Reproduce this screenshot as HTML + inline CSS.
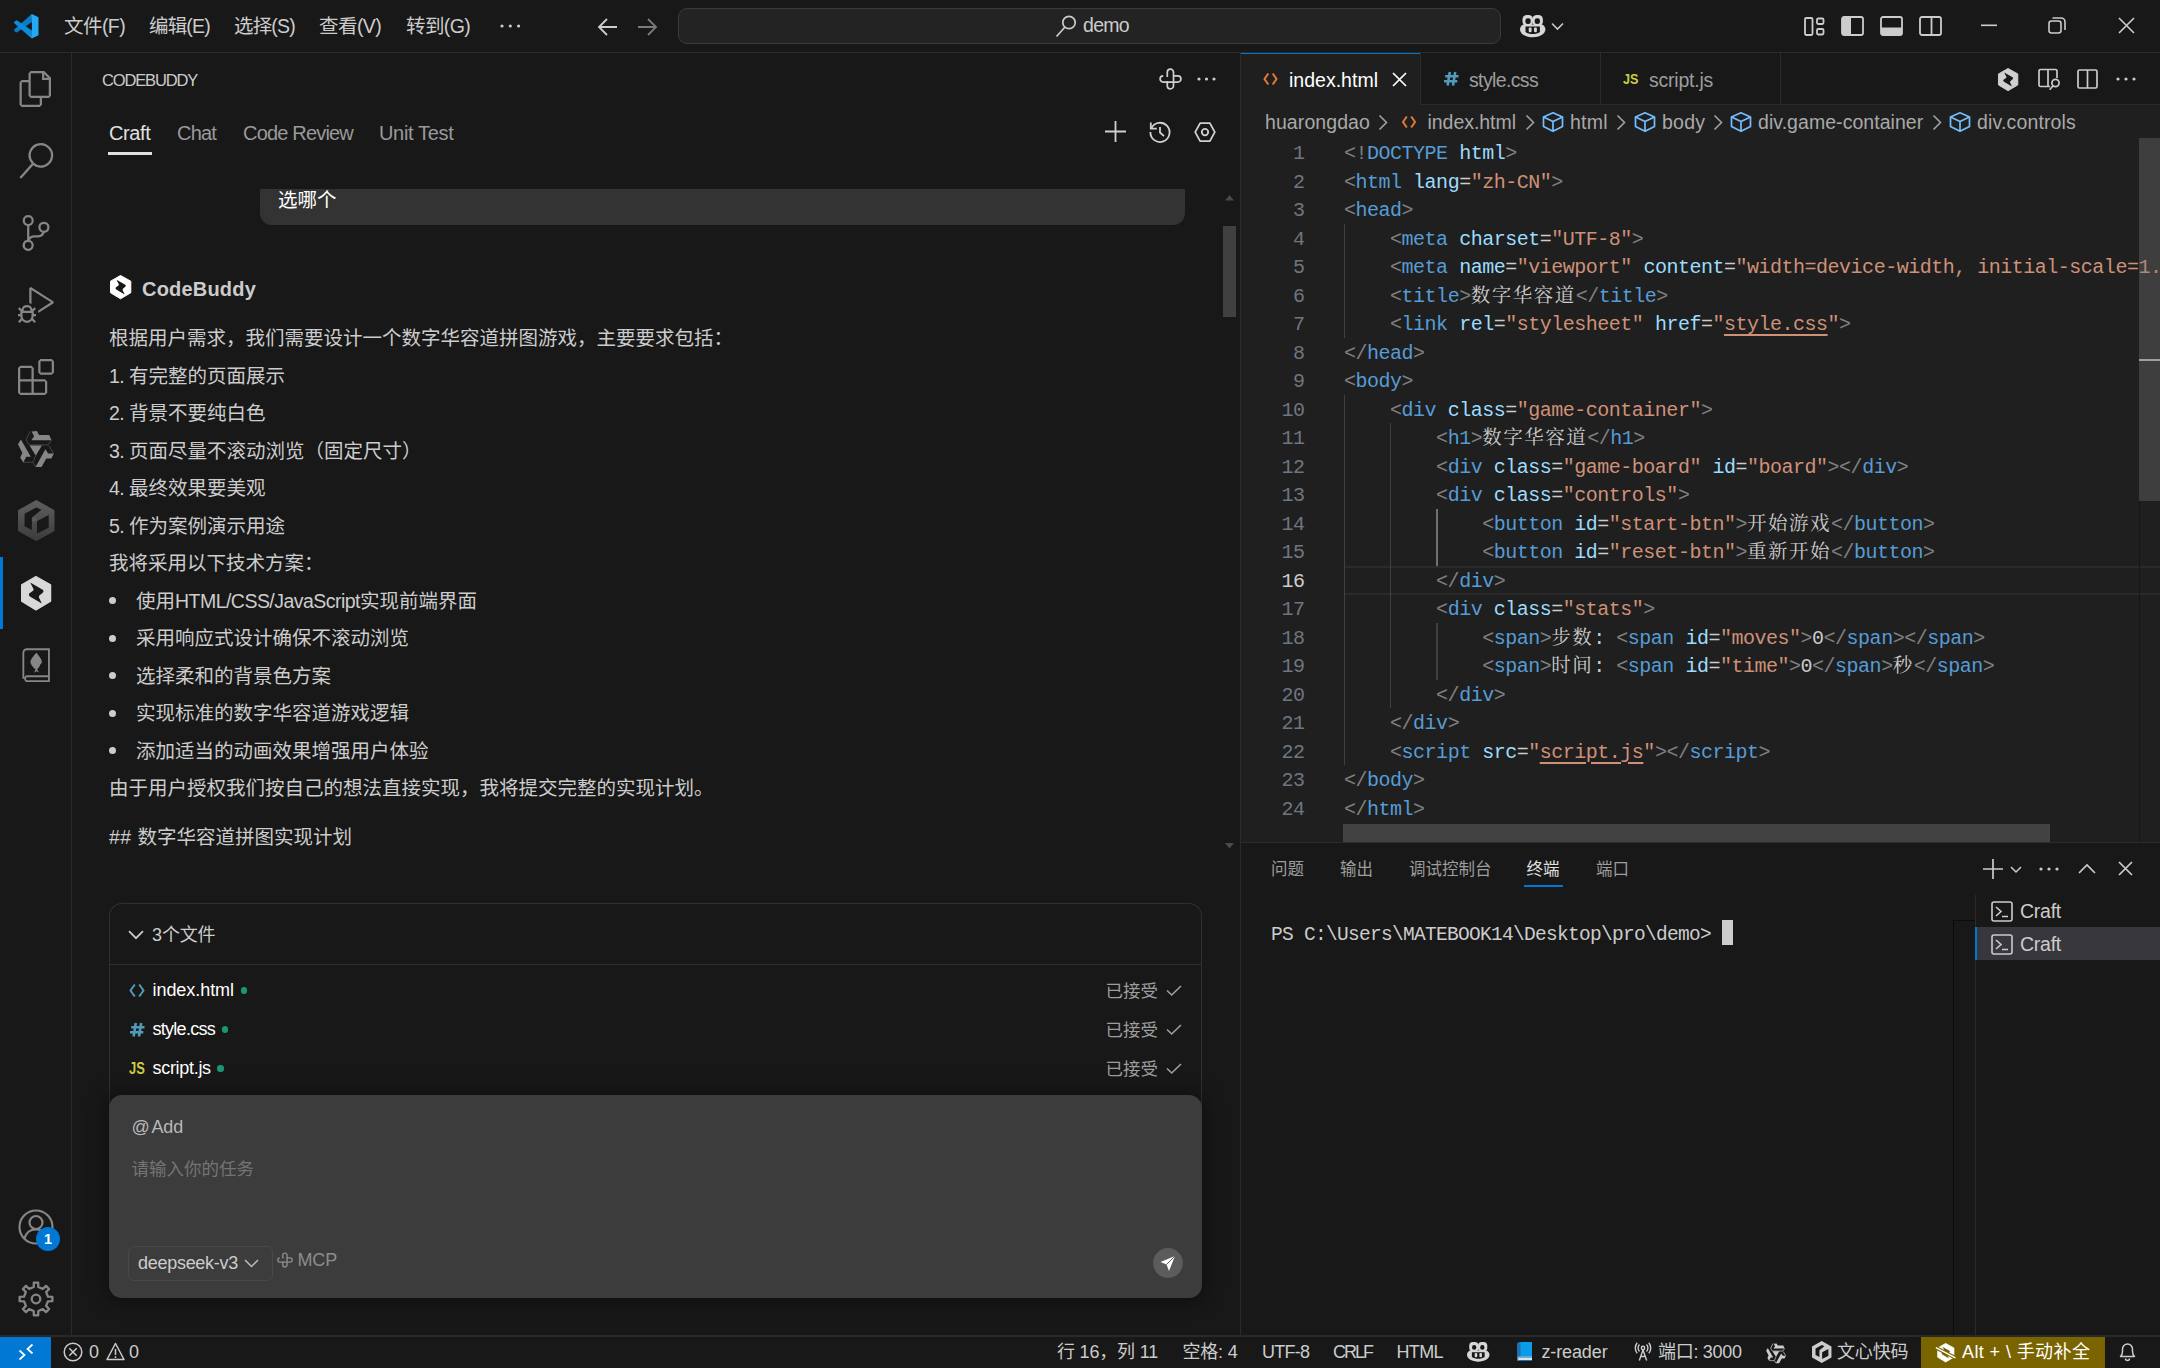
<!DOCTYPE html>
<html lang="zh-CN">
<head>
<meta charset="UTF-8">
<title>demo - CodeBuddy</title>
<style>
*{box-sizing:border-box}
html,body{margin:0;padding:0;background:#181818}
html{overflow:hidden;width:2160px;height:1368px}
body{width:2160px;height:1368px;background:#181818;overflow:hidden;position:relative;
 font-family:"Liberation Sans","Noto Sans CJK SC",sans-serif;color:#cccccc;font-size:19.5px}
.a{position:absolute}
.t{position:absolute;white-space:nowrap;line-height:1;display:block}
svg{position:absolute;overflow:visible}
.mono{font-family:"Liberation Mono","Noto Serif CJK SC",monospace}
/* ---------- title bar ---------- */
#titlebar{left:0;top:0;width:2160px;height:52px;background:#181818}
#titleline{left:0;top:52px;width:2160px;height:1px;background:#2b2b2b}
#searchbox{left:678px;top:8px;width:823px;height:35.5px;border:1px solid #3a3a3a;border-radius:9px;background:#232323}
.menu{top:17px;font-size:19.5px;color:#cccccc}
/* ---------- activity bar ---------- */
#actbar{left:0;top:53px;width:71px;height:1282px;background:#181818}
#actline{left:71px;top:53px;width:1px;height:1282px;background:#2b2b2b}
#actind{left:0;top:557px;width:3px;height:72px;background:#0078d4}
/* ---------- sidebar ---------- */
#sidebar{left:72px;top:53px;width:1168px;height:1282px;background:#181818}
#sideline{left:1240px;top:53px;width:1px;height:1282px;background:#2b2b2b}
.body{font-size:19.5px;color:#cccccc;left:109px}
.bul{left:136px}
.dot{position:absolute;left:109px;width:7px;height:7px;border-radius:50%;background:#cccccc}
/* ---------- editor ---------- */
#editor{left:1241px;top:53px;width:919px;height:789px;background:#1f1f1f}
#tabsbg{left:1241px;top:53px;width:919px;height:52px;background:#181818}
#tabsline{left:1241px;top:104px;width:919px;height:1px;background:#2b2b2b}
.tab{position:absolute;top:53px;height:52px;border-right:1px solid #2b2b2b}
.code{position:absolute;left:1344px;max-width:816px;overflow:hidden;font-size:20px;letter-spacing:-0.49px;white-space:pre;line-height:28.5px;height:28.5px;color:#cccccc}
.ln{position:absolute;left:1262px;width:42.49px;text-align:right;font-size:20px;letter-spacing:-0.49px;line-height:28.5px;height:28.5px;color:#6e7681}
.g{color:#808080}.b{color:#569cd6}.l{color:#9cdcfe}.s{color:#ce9178}.u{text-decoration:underline;text-underline-offset:4px;text-decoration-thickness:1.5px}
.ig{position:absolute;width:1.5px;background:#404040}
/* ---------- panel ---------- */
#panel{left:1241px;top:842px;width:919px;height:493px;background:#181818;border-top:1px solid #2b2b2b}
.ptab{top:861px;font-size:16.5px;color:#9d9d9d}
/* ---------- status bar ---------- */
#status{left:0;top:1335px;width:2160px;height:33px;background:#181818;border-top:2px solid #292929}
.st{top:1343px;font-size:18px;color:#cccccc}
.ac{font-size:17.5px;color:#9d9d9d}
.bc{top:113px;font-size:19.5px;color:#a9a9a9}
.cur{color:#cccccc}
.z{font-size:19.5px;letter-spacing:1.5px}
#m1{letter-spacing:-0.561px}
#m2{letter-spacing:-0.840px}
#m3{letter-spacing:-0.840px}
#m4{letter-spacing:-0.540px}
#m5{letter-spacing:-0.611px}
#demo{letter-spacing:-0.695px}
#vh{letter-spacing:-1.160px}
#tb1{letter-spacing:-0.369px}
#tb2{letter-spacing:-0.812px}
#tb3{letter-spacing:-0.814px}
#tb4{letter-spacing:-0.328px}
#cbname{letter-spacing:0.198px}
#n1{letter-spacing:-0.562px}
#n2{letter-spacing:-0.562px}
#n3{letter-spacing:-0.562px}
#n4{letter-spacing:-0.562px}
#n5{letter-spacing:-0.562px}
#lat1{letter-spacing:-0.530px}
#hh{letter-spacing:0.464px}
#fh{letter-spacing:-0.129px}
#f1{letter-spacing:-0.055px}
#f2{letter-spacing:-0.724px}
#f3{letter-spacing:-0.302px}
#add{letter-spacing:-0.144px}
#model{letter-spacing:-0.280px}
#mcp{letter-spacing:-0.133px}
#at{letter-spacing:-4.781px}
#tn1{letter-spacing:0.013px}
#tn2{letter-spacing:-0.641px}
#tn3{letter-spacing:-0.233px}
#bc1{letter-spacing:0.089px}
#bc2{letter-spacing:-0.037px}
#bc3{letter-spacing:0.214px}
#bc4{letter-spacing:0.251px}
#bc5{letter-spacing:0.051px}
#bc6{letter-spacing:0.151px}
#term{letter-spacing:-0.702px}
#cr1{letter-spacing:-0.253px}
#cr2{letter-spacing:-0.253px}
#s1{letter-spacing:-0.191px}
#s2{letter-spacing:-0.203px}
#s3{letter-spacing:-0.760px}
#s4{letter-spacing:-2.029px}
#s5{letter-spacing:-0.625px}
#s6{letter-spacing:-0.129px}
#s7{letter-spacing:-0.293px}
#s8{letter-spacing:-0.175px}
#s9{letter-spacing:0.397px}
</style>
</head>
<body>
<!-- ================= TITLE BAR ================= -->
<div class="a" id="titlebar"></div>
<div class="a" id="titleline"></div>
<div class="a" id="searchbox"></div>
<!-- VS Code logo -->
<svg style="left:13.900px;top:13.600px" width="24.500" height="24.700" viewBox="0 0 100 100">
  <path d="M71 1 L0 64 L2.500 71 L11.400 75.300 L73 32.600 Z" fill="#0b7cc4"/>
  <path d="M71 99 L0 36 L2.500 29 L11.400 24.700 L73 67.400 Z" fill="#0d8cdc"/>
  <path d="M72.700 0 L100 12.400 L100 86.500 L72.700 100 L70 96 L73 67 L73 33 L70 4 Z" fill="#24a8f2"/>
</svg>
<span class="t menu" id="m1" style="left:64px">文件(F)</span>
<span class="t menu" id="m2" style="left:149px">编辑(E)</span>
<span class="t menu" id="m3" style="left:234px">选择(S)</span>
<span class="t menu" id="m4" style="left:319px">查看(V)</span>
<span class="t menu" id="m5" style="left:406px">转到(G)</span>
<!-- ellipsis -->
<svg style="left:500px;top:24px" width="21" height="4" viewBox="0 0 21 4"><circle cx="2" cy="2" r="1.6" fill="#cccccc"/><circle cx="10.3" cy="2" r="1.6" fill="#cccccc"/><circle cx="18.6" cy="2" r="1.6" fill="#cccccc"/></svg>
<!-- nav arrows -->
<svg style="left:597px;top:16.700px" width="21" height="20" viewBox="0 0 21 20" fill="none" stroke="#cccccc" stroke-width="1.8"><path d="M20 10H2M10 2L2 10l8 8"/></svg>
<svg style="left:637px;top:16.700px" width="21" height="20" viewBox="0 0 21 20" fill="none" stroke="#7a7a7a" stroke-width="1.8"><path d="M1 10h18M11 2l8 8-8 8"/></svg>
<!-- search label -->
<svg style="left:1055px;top:14px" width="22" height="24" viewBox="0 0 22 24" fill="none" stroke="#cccccc" stroke-width="1.7"><circle cx="14" cy="8.5" r="6.2"/><path d="M9.8 13.2L1.5 22.5"/></svg>
<span class="t" id="demo" style="left:1083px;top:16px;font-size:19.5px;color:#cccccc">demo</span>
<!-- copilot -->
<svg style="left:1520.2px;top:14.9px" width="25.4" height="22.2" viewBox="0 0 25.400 22.200">
  <rect x="2.500" y="0" width="10.500" height="10.900" rx="4.300" fill="#d7d7d7"/>
  <rect x="12.400" y="0" width="10.500" height="10.900" rx="4.300" fill="#d7d7d7"/>
  <path d="M3.200 9.600 H22.200 C24.500 10.800 25.400 12.500 25.400 14.500 C25.400 19 19.500 22.200 12.700 22.200 C5.900 22.200 0 19 0 14.500 C0 12.500 0.900 10.800 3.200 9.600Z" fill="#d7d7d7"/>
  <rect x="5.400" y="3.300" width="5.300" height="5.600" rx="2.500" fill="#181818"/>
  <rect x="14.700" y="3.300" width="5.300" height="5.600" rx="2.500" fill="#181818"/>
  <path d="M5.500 11.600 H19.900 V17 C18 18.400 15.500 19 12.700 19 C9.900 19 7.400 18.400 5.500 17Z" fill="#181818"/>
  <rect x="8.700" y="12.400" width="2.900" height="4.800" rx="1.200" fill="#d7d7d7"/>
  <rect x="14" y="12.400" width="2.900" height="4.800" rx="1.200" fill="#d7d7d7"/>
</svg>
<svg style="left:1551px;top:22px" width="13" height="9" viewBox="0 0 13 9" fill="none" stroke="#cccccc" stroke-width="1.6"><path d="M1 1.500l5.500 5.500 5.500-5.500"/></svg>
<!-- layout controls -->
<svg style="left:1804px;top:17px" width="21" height="19" viewBox="0 0 21 19" fill="none" stroke="#cccccc" stroke-width="1.8"><rect x="1" y="1" width="7.500" height="17" rx="1.200"/><rect x="13" y="1.500" width="6.500" height="5.500" rx="1.200"/><rect x="13" y="12" width="6.500" height="5.500" rx="1.200"/></svg>
<svg style="left:1841px;top:16px" width="23" height="20" viewBox="0 0 23 20"><rect x="1" y="1" width="21" height="18" rx="2" fill="none" stroke="#cccccc" stroke-width="1.800"/><path d="M1 2.500A1.500 1.500 0 0 1 2.500 1H10v18H2.500A1.500 1.500 0 0 1 1 17.500z" fill="#cccccc"/></svg>
<svg style="left:1880px;top:16px" width="23" height="20" viewBox="0 0 23 20"><rect x="1" y="1" width="21" height="18" rx="2" fill="none" stroke="#cccccc" stroke-width="1.800"/><path d="M1 11.500h21v6A1.500 1.500 0 0 1 20.500 19h-18A1.500 1.500 0 0 1 1 17.500z" fill="#cccccc"/></svg>
<svg style="left:1919px;top:16px" width="23" height="20" viewBox="0 0 23 20" fill="none" stroke="#cccccc" stroke-width="1.800"><rect x="1" y="1" width="21" height="18" rx="2"/><path d="M12.500 1v18"/></svg>
<!-- window controls -->
<svg style="left:1981px;top:24px" width="16" height="3" viewBox="0 0 16 3"><rect x="0" y="0.500" width="16" height="1.600" fill="#cccccc"/></svg>
<svg style="left:2048px;top:17px" width="18" height="17" viewBox="0 0 18 17" fill="none" stroke="#cccccc" stroke-width="1.600"><rect x="1" y="4" width="12" height="12" rx="2.500"/><path d="M4.500 1h8.500a4 4 0 0 1 4 4v8"/></svg>
<svg style="left:2118px;top:17px" width="17" height="17" viewBox="0 0 17 17" fill="none" stroke="#cccccc" stroke-width="1.600"><path d="M1 1l15 15M16 1L1 16"/></svg>


<!-- ================= ACTIVITY BAR ================= -->
<div class="a" id="actbar"></div>
<div class="a" id="actline"></div>
<div class="a" id="actind"></div>

<!-- explorer -->
<svg style="left:18px;top:71px" width="36" height="36" viewBox="0 0 24 24"><path fill="#868686" d="M17.5 0h-9L7 1.500V6H2.500L1 7.500v15.070L2.500 24h12.070L16 22.570V18h4.700l1.300-1.430V4.500L17.500 0zm0 2.120l2.380 2.380H17.500V2.120zm-3 20.380h-12v-15H7v9.070L8.500 18h6v4.500zm6-6h-12v-15H16V6h4.500v10.500z"/></svg>
<!-- search -->
<svg style="left:18px;top:143px" width="36" height="36" viewBox="0 0 24 24"><path fill="#868686" d="M15.250 0a8.250 8.250 0 0 0-6.180 13.720L1 22.880l1.120 1 8.050-9.120A8.251 8.251 0 1 0 15.250.010V0zm0 15a6.750 6.750 0 1 1 0-13.500 6.750 6.750 0 0 1 0 13.500z"/></svg>
<!-- source control -->
<svg style="left:18px;top:215px" width="36" height="36" viewBox="0 0 24 24"><path fill="#868686" d="M21.007 8.222A3.738 3.738 0 0 0 15.045 5.200a3.737 3.737 0 0 0 1.156 6.583 2.988 2.988 0 0 1-2.668 1.670h-2.990a4.456 4.456 0 0 0-2.989 1.165V7.400a3.737 3.737 0 1 0-1.494 0v9.117a3.776 3.776 0 1 0 1.816.099 2.990 2.990 0 0 1 2.668-1.667h2.990a4.484 4.484 0 0 0 4.223-3.039 3.736 3.736 0 0 0 3.250-3.687zM4.565 3.738a2.242 2.242 0 1 1 4.484 0 2.242 2.242 0 0 1-4.484 0zm4.484 16.441a2.242 2.242 0 1 1-4.484 0 2.242 2.242 0 0 1 4.484 0zm8.221-9.715a2.242 2.242 0 1 1 0-4.485 2.242 2.242 0 0 1 0 4.485z"/></svg>
<!-- run and debug -->
<svg style="left:18px;top:287px" width="36" height="36" viewBox="0 0 24 24"><path fill="#868686" d="M10.940 13.500l-1.320 1.320a3.730 3.730 0 0 0-7.240 0L1.060 13.500 0 14.560l1.720 1.720-.220.220V18H0v1.500h1.500v.080c.077.489.214.966.410 1.420L0 22.940 1.060 24l1.650-1.650A4.308 4.308 0 0 0 6 24a4.310 4.310 0 0 0 3.290-1.650L10.940 24 12 22.940 10.090 21c.198-.464.336-.951.410-1.450v-.100H12V18h-1.500v-1.500l-.220-.220L12 14.560l-1.060-1.060zM6 13.500a2.250 2.250 0 0 1 2.250 2.250h-4.500A2.250 2.250 0 0 1 6 13.500zm3 6a3.330 3.330 0 0 1-3 3 3.330 3.330 0 0 1-3-3v-2.250h6v2.250zm14.760-9.900v1.260L13.500 17.370V15.600l8.500-5.370L9 2v9.460a5.070 5.070 0 0 0-1.500-.720V.630L8.640 0l15.120 9.600z"/></svg>
<!-- extensions -->
<svg style="left:18px;top:359px" width="36" height="36" viewBox="0 0 24 24"><path fill="#868686" fill-rule="evenodd" d="M13.500 1.500L15 0h7.500L24 1.500V9l-1.500 1.500H15L13.500 9V1.500zm1.500 0V9h7.500V1.500H15zM0 15V6l1.500-1.500H9L10.500 6v7.500H18l1.500 1.500v7.500L18 24H1.500L0 22.500V15zm9-1.500V6H1.500v7.500H9zM9 15H1.500v7.500H9V15zm1.500 7.500H18V15h-7.500v7.500z"/></svg>
<!-- tongyi-like swirl -->
<svg style="left:14px;top:426px" width="44" height="46" viewBox="0 0 1309 1368">
 <g fill="#868686">
  <path d="M525 165 L680 150 L745 265 L1045 265 L1118 420 L512 420 L598 305 Z"/>
  <path d="M462 577 L828 577 L648 888 Z"/>
  <path d="M205 403 L118 545 L250 805 L185 935 L275 1085 L365 915 L500 915 L218 420 Z"/>
  <path d="M935 690 L1015 815 L1187 815 L1110 965 L960 965 L820 1217 L638 1217 L662 1180 Z"/>
 </g>
 <g fill="none" stroke="#868686" stroke-width="16" opacity=".8">
  <path d="M482 155 L360 415 L452 562 L1015 562 L1112 425"/>
  <path d="M1040 590 L1172 805"/>
  <path d="M285 1078 L562 1078 L640 1205"/>
  <path d="M645 890 L568 1062"/>
 </g>
</svg>
<!-- comate-like hex cube -->
<svg style="left:17.700px;top:499.700px" width="36.500" height="41.300" viewBox="0 0 36.500 41.300">
 <defs><linearGradient id="cg" x1="0" y1="0" x2="0" y2="1"><stop offset="0" stop-color="#606060"/><stop offset="1" stop-color="#3a3a3a"/></linearGradient></defs>
 <path d="M18.270 0 L36.500 10.200 L36.500 31 L18.270 41.300 L0 31 L0 10.200 Z" fill="url(#cg)"/>
 <path d="M6.570 13.870 L18.270 7.580 L23.400 9.770 L13.880 17.500 L13.880 29.950 L6.570 26.300 Z" fill="#181818"/>
 <path d="M19 21.200 L30.700 15 L30.700 27.760 L19 33.600 Z" fill="#181818"/>
 <circle cx="16.400" cy="19.400" r="2.500" fill="#5a5a5a"/>
</svg>
<!-- codebuddy (active) -->
<svg style="left:20.900px;top:575.700px" width="30.240" height="34.500" viewBox="0 0 30.240 34.500">
 <path d="M14.950 0.700 L29.540 8.800 L29.540 25.200 L14.950 33.800 L0.700 25.200 L0.700 8.800 Z" fill="#d8d8d8" stroke="#d8d8d8" stroke-width="1.400" stroke-linejoin="round"/>
 <path d="M9.200 6.600 L21.700 13.800 Q23.300 15 22 16.500 L18.400 19.600 Q17.600 20.500 18 21.500 L20.800 27.600 L8.900 20.500 Q7 19 8.200 17.600 L12 14.800 Q13 14 12.500 13 Z" fill="#181818"/>
</svg>
<!-- z-reader book -->
<svg style="left:14px;top:642px" width="44" height="46" viewBox="0 0 1309 1368" fill="none" stroke="#868686" stroke-width="55">
 <path d="M278 1090 V320 A105 105 0 0 1 383 215 H1040 V1165 H370 A85 85 0 0 1 370 1020 H1040"/>
 <path d="M665 320 C740 400 830 520 830 595 C830 640 790 640 760 720 C740 770 700 790 690 810 L745 910 L670 870 L598 912 L640 810 C620 790 580 770 560 735 C520 680 490 660 490 590 C490 520 590 400 665 320 Z" fill="#868686" stroke="none"/>
</svg>
<!-- account -->
<svg style="left:18px;top:1209px" width="36" height="36" viewBox="0 0 36 36" fill="none" stroke="#868686" stroke-width="2.200">
 <circle cx="18" cy="18" r="16.500"/><circle cx="18" cy="13.500" r="6.500"/><path d="M6.500 29.500c1.500-6 6-9 11.500-9s10 3 11.500 9"/>
</svg>
<div class="a" style="left:36px;top:1227px;width:24px;height:24px;border-radius:50%;background:#0078d4"></div>
<span class="t" style="left:36px;top:1232px;width:24px;text-align:center;font-size:14.500px;font-weight:bold;color:#ffffff">1</span>
<!-- manage gear -->
<svg style="left:18px;top:1281px" width="36" height="36" viewBox="0 0 36 36" fill="none" stroke="#868686" stroke-width="2.300" stroke-linejoin="round">
 <path d="M29.98 15.70 L34.36 15.83 L34.36 20.17 L29.98 20.30 L28.10 24.85 L31.10 28.03 L28.03 31.10 L24.85 28.10 L20.30 29.98 L20.17 34.36 L15.83 34.36 L15.70 29.98 L11.15 28.10 L7.97 31.10 L4.90 28.03 L7.90 24.85 L6.02 20.30 L1.64 20.17 L1.64 15.83 L6.02 15.70 L7.90 11.15 L4.90 7.97 L7.97 4.90 L11.15 7.90 L15.70 6.02 L15.83 1.64 L20.17 1.64 L20.30 6.02 L24.85 7.90 L28.03 4.90 L31.10 7.97 L28.10 11.15Z"/><circle cx="18" cy="18" r="4.300"/>
</svg>


<!-- ================= SIDEBAR ================= -->
<div class="a" id="sidebar"></div>
<div class="a" id="sideline"></div>
<!-- view header -->
<span class="t" id="vh" style="left:102px;top:72px;font-size:16.500px;color:#cccccc">CODEBUDDY</span>
<!-- MCP knot icon -->
<svg style="left:1159px;top:68px" width="23" height="22" viewBox="0 0 23 22" fill="none" stroke="#d0d0d0" stroke-width="1.700">
 <path d="M8.300 9V4.200a3.100 3.100 0 0 1 6.200 0v13.600a3.100 3.100 0 0 1-6.200 0V13"/>
 <path d="M14 7.900h4.800a3.100 3.100 0 0 1 0 6.200H4.200a3.100 3.100 0 0 1 0-6.200"/>
</svg>
<svg style="left:1197px;top:77px" width="20" height="4" viewBox="0 0 20 4"><circle cx="2" cy="2" r="1.600" fill="#cccccc"/><circle cx="9.500" cy="2" r="1.600" fill="#cccccc"/><circle cx="17" cy="2" r="1.600" fill="#cccccc"/></svg>
<!-- sub tabs -->
<span class="t" id="tb1" style="left:109px;top:122.5px;font-size:20px;color:#e0e0e0">Craft</span>
<span class="t" id="tb2" style="left:177px;top:122.5px;font-size:20px;color:#9a9a9a">Chat</span>
<span class="t" id="tb3" style="left:243px;top:122.5px;font-size:20px;color:#9a9a9a">Code Review</span>
<span class="t" id="tb4" style="left:379px;top:122.5px;font-size:20px;color:#9a9a9a">Unit Test</span>
<div class="a" style="left:108px;top:152px;width:44px;height:3px;background:#e0e0e0"></div>
<svg style="left:1105px;top:121px" width="21" height="21" viewBox="0 0 21 21" fill="none" stroke="#d0d0d0" stroke-width="1.800"><path d="M10.500 0v21M0 10.500h21"/></svg>
<svg style="left:1148px;top:120px" width="24" height="24" viewBox="0 0 24 24" fill="none" stroke="#d0d0d0" stroke-width="1.800"><path d="M3.300 8.300A9.600 9.600 0 1 1 2.400 12"/><path d="M2.800 2.600v6h6"/><path d="M12 7v5.500l4 3.600"/></svg>
<svg style="left:1194px;top:122px" width="22" height="20.200" viewBox="0 0 24 22" fill="none" stroke="#d0d0d0" stroke-width="2"><path d="M6.700 1.200h10.600L22.700 11 17.300 20.800H6.700L1.300 11z" stroke-linejoin="round"/><circle cx="12" cy="11" r="3.500"/></svg>
<!-- user bubble (clipped at top) -->
<div class="a" style="left:260px;top:189px;width:925px;height:36px;background:#333333;border-radius:0 0 12px 12px"></div>
<span class="t" style="left:278px;top:191px;font-size:19.500px;color:#ffffff">选哪个</span>
<!-- scrollbar -->
<svg style="left:1225px;top:195px" width="9" height="6" viewBox="0 0 9 6"><path d="M4.500 0L9 5.500H0z" fill="#4a4a4a"/></svg>
<div class="a" style="left:1223px;top:226px;width:13px;height:91px;background:#404040"></div>
<svg style="left:1225px;top:843px" width="9" height="6" viewBox="0 0 9 6"><path d="M0 0h9L4.500 5.500z" fill="#4a4a4a"/></svg>
<!-- assistant header -->
<svg style="left:109.700px;top:274.700px" width="21.300" height="24.300" viewBox="0 0 30.240 34.500">
 <path d="M14.950 0.700 L29.540 8.800 L29.540 25.200 L14.950 33.800 L0.700 25.200 L0.700 8.800 Z" fill="#ffffff" stroke="#ffffff" stroke-width="1.400" stroke-linejoin="round"/>
 <path d="M9.200 6.600 L21.700 13.800 Q23.300 15 22 16.500 L18.400 19.600 Q17.600 20.500 18 21.500 L20.800 27.600 L8.900 20.500 Q7 19 8.200 17.600 L12 14.800 Q13 14 12.500 13 Z" fill="#181818"/>
</svg>
<span class="t" id="cbname" style="left:142px;top:278.500px;font-size:20px;font-weight:bold;color:#cccccc">CodeBuddy</span>

<span class="t body" id="L0" style="left:109px;top:329px">根据用户需求，我们需要设计一个数字华容道拼图游戏，主要要求包括：</span>
<span class="t body" id="L1" style="left:109px;top:366.5px"><span id="n1">1. </span>有完整的页面展示</span>
<span class="t body" id="L2" style="left:109px;top:404px"><span id="n2">2. </span>背景不要纯白色</span>
<span class="t body" id="L3" style="left:109px;top:441.5px"><span id="n3">3. </span>页面尽量不滚动浏览（固定尺寸）</span>
<span class="t body" id="L4" style="left:109px;top:479px"><span id="n4">4. </span>最终效果要美观</span>
<span class="t body" id="L5" style="left:109px;top:516.5px"><span id="n5">5. </span>作为案例演示用途</span>
<span class="t body" id="L6" style="left:109px;top:554px">我将采用以下技术方案：</span>
<span class="t body" id="B1" style="left:136px;top:591.5px">使用<span id="lat1">HTML/CSS/JavaScript</span>实现前端界面</span>
<span class="t body" id="B2" style="left:136px;top:629px">采用响应式设计确保不滚动浏览</span>
<span class="t body" id="B3" style="left:136px;top:666.5px">选择柔和的背景色方案</span>
<span class="t body" id="B4" style="left:136px;top:704px">实现标准的数字华容道游戏逻辑</span>
<span class="t body" id="B5" style="left:136px;top:741.5px">添加适当的动画效果增强用户体验</span>
<span class="t body" id="L7" style="left:109px;top:779px">由于用户授权我们按自己的想法直接实现，我将提交完整的实现计划。</span>
<span class="t body" id="L8" style="left:109px;top:828px"><span id="hh">## </span>数字华容道拼图实现计划</span>
<div class="dot" style="top:597px"></div>
<div class="dot" style="top:634.5px"></div>
<div class="dot" style="top:672px"></div>
<div class="dot" style="top:709.5px"></div>
<div class="dot" style="top:747px"></div>
<!-- files box -->
<div class="a" style="left:109px;top:903px;width:1093px;height:205px;border:1px solid #303030;border-radius:13px 13px 0 0;border-bottom:none"></div>
<div class="a" style="left:110px;top:964px;width:1091px;height:1px;background:#303030"></div>
<svg style="left:128px;top:930px" width="16" height="10" viewBox="0 0 16 10" fill="none" stroke="#cccccc" stroke-width="1.700"><path d="M1 1.200l7 7 7-7"/></svg>
<span class="t" id="fh" style="left:152px;top:926px;font-size:18px;color:#cccccc">3个文件</span>
<!-- file rows -->
<svg style="left:129px;top:983px" width="16" height="15" viewBox="0 0 16 15" fill="none" stroke="#519aba" stroke-width="2"><path d="M5.800 1.500L1.500 7.500l4.300 6M10.200 1.500l4.300 6-4.300 6"/></svg>
<span class="t" id="f1" style="left:152.500px;top:981px;font-size:18px;color:#ffffff">index.html</span>
<div class="a" style="left:240.500px;top:987px;width:6.500px;height:6.500px;border-radius:50%;background:#1a9870"></div>
<svg style="left:129.7px;top:1023.2px" width="14.500" height="13.500" viewBox="0 0 14.500 13.500" fill="none" stroke="#519aba" stroke-width="2.600"><path d="M5.800 0L3.600 13.500M11.200 0L9 13.500M1.200 4.200H14.500M0 9.300H13.300"/></svg>
<span class="t" id="f2" style="left:152.500px;top:1020px;font-size:18px;color:#ffffff">style.css</span>
<div class="a" style="left:221.500px;top:1026px;width:6.500px;height:6.500px;border-radius:50%;background:#1a9870"></div>
<span class="t" style="left:129.200px;top:1060px;font-size:17px;font-weight:bold;color:#cbcb41;transform:scaleX(.76);transform-origin:0 0">JS</span>
<span class="t" id="f3" style="left:152.500px;top:1059px;font-size:18px;color:#ffffff">script.js</span>
<div class="a" style="left:217px;top:1065px;width:6.500px;height:6.500px;border-radius:50%;background:#1a9870"></div>
<span class="t ac" style="left:1105.500px;top:982.500px">已接受</span>
<span class="t ac" style="left:1105.500px;top:1021.500px">已接受</span>
<span class="t ac" style="left:1105.500px;top:1060.500px">已接受</span>
<svg style="left:1166px;top:985px" width="16" height="11" viewBox="0 0 16 11" fill="none" stroke="#a0a0a0" stroke-width="1.600"><path d="M1 5.500l4.700 4.500L15 1"/></svg>
<svg style="left:1166px;top:1024px" width="16" height="11" viewBox="0 0 16 11" fill="none" stroke="#a0a0a0" stroke-width="1.600"><path d="M1 5.500l4.700 4.500L15 1"/></svg>
<svg style="left:1166px;top:1063px" width="16" height="11" viewBox="0 0 16 11" fill="none" stroke="#a0a0a0" stroke-width="1.600"><path d="M1 5.500l4.700 4.500L15 1"/></svg>
<!-- input box -->
<div class="a" style="left:109px;top:1095px;width:1093px;height:203px;background:#3c3c3c;border-radius:13px;box-shadow:0 0 18px 4px rgba(0,0,0,.35)"></div>
<span class="t" id="at" style="left:131.500px;top:1118px;font-size:18px;color:#b8b8b8">@</span>
<span class="t" id="add" style="left:151.500px;top:1118px;font-size:18px;color:#b8b8b8">Add</span>
<span class="t" id="ph" style="left:131.500px;top:1161px;font-size:17.500px;color:#747474">请输入你的任务</span>
<div class="a" style="left:128px;top:1246px;width:145px;height:35px;border:1px solid #484848;border-radius:6px"></div>
<span class="t" id="model" style="left:138px;top:1254px;font-size:18px;color:#cccccc">deepseek-v3</span>
<svg style="left:244px;top:1259px" width="15" height="9" viewBox="0 0 15 9" fill="none" stroke="#bbbbbb" stroke-width="1.500"><path d="M1 1l6.500 6.500L14 1"/></svg>
<svg style="left:277px;top:1252px" width="16" height="16" viewBox="0 0 23 22" fill="none" stroke="#8c8c8c" stroke-width="2"><path d="M8.300 9V4.200a3.100 3.100 0 0 1 6.200 0v13.600a3.100 3.100 0 0 1-6.200 0V13"/><path d="M14 7.900h4.800a3.100 3.100 0 0 1 0 6.200H4.200a3.100 3.100 0 0 1 0-6.200"/></svg>
<span class="t" id="mcp" style="left:297.500px;top:1251px;font-size:18px;color:#8c8c8c">MCP</span>
<div class="a" style="left:1153px;top:1248px;width:30px;height:30px;border-radius:50%;background:#5c5c5c"></div>
<svg style="left:1159px;top:1255px" width="17" height="17" viewBox="0 0 17 17"><path d="M16 1L1.500 7l6 2.500L10 16z" fill="#ffffff"/><path d="M16 1L7.500 9.500" stroke="#5c5c5c" stroke-width="1"/></svg>



<!-- ================= EDITOR ================= -->
<div class="a" id="editor"></div>
<div class="a" id="tabsbg"></div>
<div class="a" id="tabsline"></div>
<!-- tabs -->
<div class="tab" style="left:1241px;width:180px;background:#1f1f1f;height:52px"></div>
<div class="a" style="left:1241px;top:53px;width:179px;height:1px;background:#0078d4"></div>
<div class="tab" style="left:1421px;width:180px;height:51px"></div>
<div class="tab" style="left:1601px;width:180px;height:51px"></div>
<svg style="left:1263px;top:72px" width="15" height="14" viewBox="0 0 15 14" fill="none" stroke="#e37933" stroke-width="2"><path d="M5.300 1.500L1.500 7l3.800 5.500M9.700 1.500L13.500 7l-3.800 5.500"/></svg>
<span class="t" id="tn1" style="left:1289px;top:71px;font-size:19.500px;color:#ffffff">index.html</span>
<svg style="left:1392px;top:72px" width="15" height="15" viewBox="0 0 15 15" fill="none" stroke="#ffffff" stroke-width="1.700"><path d="M1 1l13 13M14 1L1 14"/></svg>
<svg style="left:1443.7px;top:71.8px" width="14.500" height="13.500" viewBox="0 0 14.500 13.500" fill="none" stroke="#519aba" stroke-width="2.600"><path d="M5.800 0L3.600 13.500M11.200 0L9 13.500M1.200 4.200H14.500M0 9.300H13.300"/></svg>
<span class="t" id="tn2" style="left:1469px;top:71px;font-size:19.500px;color:#9d9d9d">style.css</span>
<span class="t" style="left:1623.300px;top:71px;font-size:15px;font-weight:bold;color:#cbcb41;transform:scaleX(.84);transform-origin:0 0">JS</span>
<span class="t" id="tn3" style="left:1649px;top:71px;font-size:19.500px;color:#9d9d9d">script.js</span>
<!-- editor actions -->
<svg style="left:1998px;top:67.500px" width="20.300" height="23.200" viewBox="0 0 30.240 34.500">
 <path d="M14.950 0.700 L29.540 8.800 L29.540 25.200 L14.950 33.800 L0.700 25.200 L0.700 8.800 Z" fill="#d0d0d0" stroke="#d0d0d0" stroke-width="1.400" stroke-linejoin="round"/>
 <path d="M9.200 6.600 L21.700 13.800 Q23.300 15 22 16.500 L18.400 19.600 Q17.600 20.500 18 21.500 L20.800 27.600 L8.900 20.500 Q7 19 8.200 17.600 L12 14.800 Q13 14 12.500 13 Z" fill="#181818"/>
</svg>
<svg style="left:2038px;top:68px" width="23" height="23" viewBox="0 0 23 23" fill="none" stroke="#cccccc" stroke-width="1.700"><path d="M12 18.500H2.500a1.500 1.500 0 0 1-1.500-1.500V3A1.500 1.500 0 0 1 2.500 1.500h15A1.500 1.500 0 0 1 19 3v7"/><path d="M10 1.500v17"/><circle cx="17.500" cy="15" r="3.600"/><path d="M15 17.800l-3.300 4"/></svg>
<svg style="left:2077px;top:69px" width="21" height="20" viewBox="0 0 21 20" fill="none" stroke="#cccccc" stroke-width="1.700"><rect x="1" y="1" width="19" height="18" rx="1.500"/><path d="M10.500 1v18"/></svg>
<svg style="left:2116px;top:77px" width="20" height="4" viewBox="0 0 20 4"><circle cx="2" cy="2" r="1.600" fill="#cccccc"/><circle cx="10" cy="2" r="1.600" fill="#cccccc"/><circle cx="18" cy="2" r="1.600" fill="#cccccc"/></svg>

<!-- breadcrumbs -->
<span class="t bc" id="bc1" style="left:1265px">huarongdao</span>
<svg style="left:1377.5px;top:114px" width="10" height="17" viewBox="0 0 10 17" fill="none" stroke="#a0a0a0" stroke-width="1.600"><path d="M1.500 1.500L8.500 8.500l-7 7"/></svg>
<svg style="left:1401px;top:115px" width="16" height="14" viewBox="0 0 15 14" fill="none" stroke="#e37933" stroke-width="2"><path d="M5.300 1.500L1.500 7l3.800 5.500M9.700 1.500L13.500 7l-3.800 5.500"/></svg>
<span class="t bc" id="bc2" style="left:1427.500px">index.html</span>
<svg style="left:1525px;top:114px" width="10" height="17" viewBox="0 0 10 17" fill="none" stroke="#a0a0a0" stroke-width="1.600"><path d="M1.500 1.500L8.500 8.500l-7 7"/></svg>
<svg style="left:1541.5px;top:111px" width="22" height="22" viewBox="0 0 22 22" fill="none" stroke="#75beff" stroke-width="1.700" stroke-linejoin="round"><path d="M11 1.800L20.500 6v9.500L11 20.200 1.500 15.500V6z"/><path d="M1.500 6L11 10.500 20.500 6M11 10.500v9.700"/></svg>
<span class="t bc" id="bc3" style="left:1570px">html</span>
<svg style="left:1616px;top:114px" width="10" height="17" viewBox="0 0 10 17" fill="none" stroke="#a0a0a0" stroke-width="1.600"><path d="M1.500 1.500L8.500 8.500l-7 7"/></svg>
<svg style="left:1633.5px;top:111px" width="22" height="22" viewBox="0 0 22 22" fill="none" stroke="#75beff" stroke-width="1.700" stroke-linejoin="round"><path d="M11 1.800L20.500 6v9.500L11 20.200 1.500 15.500V6z"/><path d="M1.500 6L11 10.500 20.500 6M11 10.500v9.700"/></svg>
<span class="t bc" id="bc4" style="left:1662px">body</span>
<svg style="left:1713px;top:114px" width="10" height="17" viewBox="0 0 10 17" fill="none" stroke="#a0a0a0" stroke-width="1.600"><path d="M1.500 1.500L8.500 8.500l-7 7"/></svg>
<svg style="left:1730px;top:111px" width="22" height="22" viewBox="0 0 22 22" fill="none" stroke="#75beff" stroke-width="1.700" stroke-linejoin="round"><path d="M11 1.800L20.500 6v9.500L11 20.200 1.500 15.500V6z"/><path d="M1.500 6L11 10.500 20.500 6M11 10.500v9.700"/></svg>
<span class="t bc" id="bc5" style="left:1758px">div.game-container</span>
<svg style="left:1932px;top:114px" width="10" height="17" viewBox="0 0 10 17" fill="none" stroke="#a0a0a0" stroke-width="1.600"><path d="M1.500 1.500L8.500 8.500l-7 7"/></svg>
<svg style="left:1949px;top:111px" width="22" height="22" viewBox="0 0 22 22" fill="none" stroke="#75beff" stroke-width="1.700" stroke-linejoin="round"><path d="M11 1.800L20.500 6v9.500L11 20.200 1.500 15.500V6z"/><path d="M1.500 6L11 10.500 20.500 6M11 10.500v9.700"/></svg>
<span class="t bc" id="bc6" style="left:1977px">div.controls</span>
<div class="a" style="left:1344px;top:566px;width:816px;height:28.500px;border-top:2px solid #2a2a2a;border-bottom:2px solid #2a2a2a"></div>
<div class="ln mono" style="top:140px">1</div>
<div class="code mono" style="top:140px"><span class="g">&lt;!</span><span class="b">DOCTYPE</span> <span class="l">html</span><span class="g">&gt;</span></div>
<div class="ln mono" style="top:168.5px">2</div>
<div class="code mono" style="top:168.5px"><span class="g">&lt;</span><span class="b">html</span> <span class="l">lang</span>=<span class="s">&quot;zh-CN&quot;</span><span class="g">&gt;</span></div>
<div class="ln mono" style="top:197px">3</div>
<div class="code mono" style="top:197px"><span class="g">&lt;</span><span class="b">head</span><span class="g">&gt;</span></div>
<div class="ln mono" style="top:225.5px">4</div>
<div class="code mono" style="top:225.5px">    <span class="g">&lt;</span><span class="b">meta</span> <span class="l">charset</span>=<span class="s">&quot;UTF-8&quot;</span><span class="g">&gt;</span></div>
<div class="ln mono" style="top:254px">5</div>
<div class="code mono" style="top:254px">    <span class="g">&lt;</span><span class="b">meta</span> <span class="l">name</span>=<span class="s">&quot;viewport&quot;</span> <span class="l">content</span>=<span class="s">&quot;width=device-width, initial-scale=1.0&quot;</span><span class="g">&gt;</span></div>
<div class="ln mono" style="top:282.5px">6</div>
<div class="code mono" style="top:282.5px">    <span class="g">&lt;</span><span class="b">title</span><span class="g">&gt;</span><span class="z">数字华容道</span><span class="g">&lt;/</span><span class="b">title</span><span class="g">&gt;</span></div>
<div class="ln mono" style="top:311px">7</div>
<div class="code mono" style="top:311px">    <span class="g">&lt;</span><span class="b">link</span> <span class="l">rel</span>=<span class="s">&quot;stylesheet&quot;</span> <span class="l">href</span>=<span class="s">&quot;</span><span class="s u">style.css</span><span class="s">&quot;</span><span class="g">&gt;</span></div>
<div class="ln mono" style="top:339.5px">8</div>
<div class="code mono" style="top:339.5px"><span class="g">&lt;/</span><span class="b">head</span><span class="g">&gt;</span></div>
<div class="ln mono" style="top:368px">9</div>
<div class="code mono" style="top:368px"><span class="g">&lt;</span><span class="b">body</span><span class="g">&gt;</span></div>
<div class="ln mono" style="top:396.5px">10</div>
<div class="code mono" style="top:396.5px">    <span class="g">&lt;</span><span class="b">div</span> <span class="l">class</span>=<span class="s">&quot;game-container&quot;</span><span class="g">&gt;</span></div>
<div class="ln mono" style="top:425px">11</div>
<div class="code mono" style="top:425px">        <span class="g">&lt;</span><span class="b">h1</span><span class="g">&gt;</span><span class="z">数字华容道</span><span class="g">&lt;/</span><span class="b">h1</span><span class="g">&gt;</span></div>
<div class="ln mono" style="top:453.5px">12</div>
<div class="code mono" style="top:453.5px">        <span class="g">&lt;</span><span class="b">div</span> <span class="l">class</span>=<span class="s">&quot;game-board&quot;</span> <span class="l">id</span>=<span class="s">&quot;board&quot;</span><span class="g">&gt;</span><span class="g">&lt;/</span><span class="b">div</span><span class="g">&gt;</span></div>
<div class="ln mono" style="top:482px">13</div>
<div class="code mono" style="top:482px">        <span class="g">&lt;</span><span class="b">div</span> <span class="l">class</span>=<span class="s">&quot;controls&quot;</span><span class="g">&gt;</span></div>
<div class="ln mono" style="top:510.5px">14</div>
<div class="code mono" style="top:510.5px">            <span class="g">&lt;</span><span class="b">button</span> <span class="l">id</span>=<span class="s">&quot;start-btn&quot;</span><span class="g">&gt;</span><span class="z">开始游戏</span><span class="g">&lt;/</span><span class="b">button</span><span class="g">&gt;</span></div>
<div class="ln mono" style="top:539px">15</div>
<div class="code mono" style="top:539px">            <span class="g">&lt;</span><span class="b">button</span> <span class="l">id</span>=<span class="s">&quot;reset-btn&quot;</span><span class="g">&gt;</span><span class="z">重新开始</span><span class="g">&lt;/</span><span class="b">button</span><span class="g">&gt;</span></div>
<div class="ln mono cur" style="top:567.5px">16</div>
<div class="code mono" style="top:567.5px">        <span class="g">&lt;/</span><span class="b">div</span><span class="g">&gt;</span></div>
<div class="ln mono" style="top:596px">17</div>
<div class="code mono" style="top:596px">        <span class="g">&lt;</span><span class="b">div</span> <span class="l">class</span>=<span class="s">&quot;stats&quot;</span><span class="g">&gt;</span></div>
<div class="ln mono" style="top:624.5px">18</div>
<div class="code mono" style="top:624.5px">            <span class="g">&lt;</span><span class="b">span</span><span class="g">&gt;</span><span class="z">步数</span>: <span class="g">&lt;</span><span class="b">span</span> <span class="l">id</span>=<span class="s">&quot;moves&quot;</span><span class="g">&gt;</span>0<span class="g">&lt;/</span><span class="b">span</span><span class="g">&gt;</span><span class="g">&lt;/</span><span class="b">span</span><span class="g">&gt;</span></div>
<div class="ln mono" style="top:653px">19</div>
<div class="code mono" style="top:653px">            <span class="g">&lt;</span><span class="b">span</span><span class="g">&gt;</span><span class="z">时间</span>: <span class="g">&lt;</span><span class="b">span</span> <span class="l">id</span>=<span class="s">&quot;time&quot;</span><span class="g">&gt;</span>0<span class="g">&lt;/</span><span class="b">span</span><span class="g">&gt;</span><span class="z">秒</span><span class="g">&lt;/</span><span class="b">span</span><span class="g">&gt;</span></div>
<div class="ln mono" style="top:681.5px">20</div>
<div class="code mono" style="top:681.5px">        <span class="g">&lt;/</span><span class="b">div</span><span class="g">&gt;</span></div>
<div class="ln mono" style="top:710px">21</div>
<div class="code mono" style="top:710px">    <span class="g">&lt;/</span><span class="b">div</span><span class="g">&gt;</span></div>
<div class="ln mono" style="top:738.5px">22</div>
<div class="code mono" style="top:738.5px">    <span class="g">&lt;</span><span class="b">script</span> <span class="l">src</span>=<span class="s">&quot;</span><span class="s u">script.js</span><span class="s">&quot;</span><span class="g">&gt;</span><span class="g">&lt;/</span><span class="b">script</span><span class="g">&gt;</span></div>
<div class="ln mono" style="top:767px">23</div>
<div class="code mono" style="top:767px"><span class="g">&lt;/</span><span class="b">body</span><span class="g">&gt;</span></div>
<div class="ln mono" style="top:795.5px">24</div>
<div class="code mono" style="top:795.5px"><span class="g">&lt;/</span><span class="b">html</span><span class="g">&gt;</span></div>
<div class="ig" style="left:1343.5px;top:223.5px;height:114px"></div>
<div class="ig" style="left:1343.5px;top:394.5px;height:370.5px"></div>
<div class="ig" style="left:1389.7px;top:423px;height:285px"></div>
<div class="ig" style="left:1436px;top:508.5px;height:57px;background:#707070"></div>
<div class="ig" style="left:1436px;top:622.5px;height:57px"></div>
<div class="a" style="left:2139px;top:138px;width:21px;height:363px;background:rgba(121,121,121,.345)"></div>
<div class="a" style="left:2139px;top:501px;width:1px;height:341px;background:#161616"></div>
<div class="a" style="left:2139px;top:358.500px;width:21px;height:2.500px;background:#a0a0a0"></div>
<div class="a" style="left:1343px;top:824px;width:707px;height:18px;background:#424242"></div>


<!-- ================= PANEL ================= -->
<div class="a" id="panel"></div>
<span class="t ptab" style="left:1271px">问题</span>
<span class="t ptab" style="left:1340px">输出</span>
<span class="t ptab" style="left:1409px">调试控制台</span>
<span class="t ptab" style="left:1526.500px;color:#e0e0e0">终端</span>
<span class="t ptab" style="left:1596px">端口</span>
<div class="a" style="left:1524px;top:885px;width:39px;height:1.500px;background:#0078d4"></div>
<!-- panel actions -->
<svg style="left:1983px;top:859px" width="20" height="20" viewBox="0 0 20 20" fill="none" stroke="#cccccc" stroke-width="1.700"><path d="M10 0v20M0 10h20"/></svg>
<svg style="left:2010px;top:866px" width="12" height="8" viewBox="0 0 12 8" fill="none" stroke="#cccccc" stroke-width="1.500"><path d="M1 1l5 5 5-5"/></svg>
<svg style="left:2039px;top:867px" width="20" height="4" viewBox="0 0 20 4"><circle cx="2" cy="2" r="1.600" fill="#cccccc"/><circle cx="10" cy="2" r="1.600" fill="#cccccc"/><circle cx="18" cy="2" r="1.600" fill="#cccccc"/></svg>
<svg style="left:2078px;top:863px" width="18" height="11" viewBox="0 0 18 11" fill="none" stroke="#cccccc" stroke-width="1.700"><path d="M1 10l8-8 8 8"/></svg>
<svg style="left:2118px;top:861px" width="15" height="15" viewBox="0 0 15 15" fill="none" stroke="#cccccc" stroke-width="1.700"><path d="M1 1l13 13M14 1L1 14"/></svg>
<!-- terminal -->
<span class="t mono" id="term" style="left:1271px;top:926px;font-size:19.500px;color:#cccccc">PS C:\Users\MATEBOOK14\Desktop\pro\demo&gt;</span>
<div class="a" style="left:1722px;top:920px;width:11px;height:25px;background:#cccccc"></div>
<!-- terminal tabs list -->
<div class="a" style="left:1953px;top:920px;width:1px;height:415px;background:#0c0c0c"></div>
<div class="a" style="left:1953px;top:920px;width:22px;height:1px;background:#0c0c0c"></div>
<div class="a" style="left:1975px;top:895px;width:1px;height:440px;background:#2b2b2b"></div>
<div class="a" style="left:1976px;top:927px;width:184px;height:33px;background:#37373d"></div>
<div class="a" style="left:1975px;top:927px;width:2px;height:33px;background:#0078d4"></div>
<svg style="left:1991px;top:901px" width="22" height="21" viewBox="0 0 22 21" fill="none" stroke="#cccccc" stroke-width="1.600"><rect x="1" y="1" width="20" height="19" rx="2"/><path d="M5 6l5 4.500-5 4.500M11 15.500h6"/></svg>
<svg style="left:1991px;top:934px" width="22" height="21" viewBox="0 0 22 21" fill="none" stroke="#cccccc" stroke-width="1.600"><rect x="1" y="1" width="20" height="19" rx="2"/><path d="M5 6l5 4.500-5 4.500M11 15.500h6"/></svg>
<span class="t" id="cr1" style="left:2020px;top:902px;font-size:19.500px;color:#cccccc">Craft</span>
<span class="t" id="cr2" style="left:2020px;top:935px;font-size:19.500px;color:#cccccc">Craft</span>


<!-- ================= STATUS BAR ================= -->
<div class="a" id="status"></div>
<div class="a" style="left:0;top:1337px;width:51px;height:31px;background:#0078d4"></div>
<svg style="left:18px;top:1343px" width="16" height="18" viewBox="0 0 16 18" fill="none" stroke="#ffffff" stroke-width="1.700"><path d="M1.500 7.500l5 4.500-5 4.500M14.500 1.500l-5 4.500 5 4.500"/></svg>
<svg style="left:63px;top:1342px" width="20" height="20" viewBox="0 0 20 20" fill="none" stroke="#cccccc" stroke-width="1.500"><circle cx="10" cy="10" r="8.800"/><path d="M6.300 6.300l7.400 7.400M13.700 6.300l-7.400 7.400"/></svg>
<span class="t st" style="left:89px">0</span>
<svg style="left:105.500px;top:1342px" width="19" height="19" viewBox="0 0 19 19" fill="none" stroke="#cccccc" stroke-width="1.500" stroke-linejoin="round"><path d="M9.500 1.500L18 17.500H1z"/><path d="M9.500 7v6M9.500 14.300v1.700"/></svg>
<span class="t st" style="left:129px">0</span>
<span class="t st" id="s1" style="left:1057px">行 16，列 11</span>
<span class="t st" id="s2" style="left:1182.500px">空格: 4</span>
<span class="t st" id="s3" style="left:1262px">UTF-8</span>
<span class="t st" id="s4" style="left:1333px">CRLF</span>
<span class="t st" id="s5" style="left:1396.500px">HTML</span>
<!-- copilot status -->
<svg style="left:1466.5px;top:1341.5px" width="22.5" height="19.7" viewBox="0 0 25.400 22.200">
  <rect x="2.500" y="0" width="10.500" height="10.900" rx="4.300" fill="#d7d7d7"/>
  <rect x="12.400" y="0" width="10.500" height="10.900" rx="4.300" fill="#d7d7d7"/>
  <path d="M3.200 9.600 H22.200 C24.500 10.800 25.400 12.500 25.400 14.500 C25.400 19 19.500 22.200 12.700 22.200 C5.900 22.200 0 19 0 14.500 C0 12.500 0.900 10.800 3.200 9.600Z" fill="#d7d7d7"/>
  <rect x="5.700" y="3.500" width="4.800" height="5.200" rx="2.300" fill="#181818"/>
  <rect x="14.900" y="3.500" width="4.800" height="5.200" rx="2.300" fill="#181818"/>
  <path d="M5.500 11.600 H19.900 V17 C18 18.400 15.500 19 12.700 19 C9.900 19 7.400 18.400 5.500 17Z" fill="#181818"/>
  <rect x="8.700" y="12.400" width="2.900" height="4.800" rx="1.200" fill="#d7d7d7"/>
  <rect x="14" y="12.400" width="2.900" height="4.800" rx="1.200" fill="#d7d7d7"/>
</svg>
<!-- book emoji drawn -->
<svg style="left:1517px;top:1342px" width="15" height="19" viewBox="0 0 15 19"><path d="M2.500 0H15v15.500H2.500z" fill="#0c9be8"/><path d="M0 2.500A2.500 2.500 0 0 1 2.500 0h1v16H0z" fill="#1f6fb0"/><path d="M0 16.500a2 2 0 0 1 2-2h13V19H2a2 2 0 0 1-2-2z" fill="#d8e6f0"/><path d="M0 16.800c0-1.200.9-2.100 2.100-2.100H15v.9H2.300c-.8 0-1.300.5-1.300 1.200s.5 1.300 1.300 1.300H15v.9H2.100C.9 19 0 18 0 16.800z" fill="#1f6fb0"/></svg>
<span class="t st" id="s6" style="left:1541.500px">z-reader</span>
<!-- radio tower -->
<svg style="left:1634px;top:1342px" width="18" height="19" viewBox="0 0 18 19" fill="none" stroke="#cccccc" stroke-width="1.400"><circle cx="9" cy="6" r="1.700"/><path d="M9 8L5.300 18.500M9 8l3.700 10.500M6.500 14.500h5"/><path d="M5.500 2.600a4.800 4.800 0 0 0 0 6.800M12.500 2.600a4.800 4.800 0 0 1 0 6.800M3.200 .800a8 8 0 0 0 0 10.400M14.800 .800a8 8 0 0 1 0 10.400"/></svg>
<span class="t st" id="s7" style="left:1658px">端口: 3000</span>
<!-- tongyi status -->
<svg style="left:1765px;top:1341px" width="22" height="23" viewBox="0 0 1309 1368">
 <g fill="#cccccc" transform="translate(-60,-20) scale(1.100)">
  <path d="M525 165 L680 150 L745 265 L1045 265 L1118 420 L512 420 L598 305 Z"/>
  <path d="M462 577 L828 577 L648 888 Z"/>
  <path d="M205 403 L118 545 L250 805 L185 935 L275 1085 L365 915 L500 915 L218 420 Z"/>
  <path d="M935 690 L1015 815 L1187 815 L1110 965 L960 965 L820 1217 L638 1217 L662 1180 Z"/>
 </g>
 <g fill="none" stroke="#cccccc" stroke-width="40" transform="translate(-60,-20) scale(1.100)">
  <path d="M482 155 L360 415 L452 562 L1015 562 L1112 425"/><path d="M1040 590 L1172 805"/><path d="M285 1078 L562 1078 L640 1205"/><path d="M645 890 L568 1062"/>
 </g>
</svg>
<!-- comate status -->
<svg style="left:1811.500px;top:1340.500px" width="19.500" height="22" viewBox="0 0 36.500 41.300">
 <path d="M18.270 0 L36.500 10.200 L36.500 31 L18.270 41.300 L0 31 L0 10.200 Z" fill="#cccccc"/>
 <path d="M6.570 13.870 L18.270 7.580 L23.400 9.770 L13.880 17.500 L13.880 29.950 L6.570 26.300 Z" fill="#181818"/>
 <path d="M19 21.200 L30.700 15 L30.700 27.760 L19 33.600 Z" fill="#181818"/>
</svg>
<span class="t st" id="s8" style="left:1837px">文心快码</span>
<!-- codebuddy status -->
<div class="a" style="left:1921px;top:1337px;width:184px;height:31px;background:#7a6400"></div>
<svg style="left:1937.200px;top:1343px" width="17.600" height="19.400" viewBox="0 0 30.240 34.500">
 <path d="M14.950 0.700 L29.540 8.800 L29.540 25.200 L14.950 33.800 L0.700 25.200 L0.700 8.800 Z" fill="#ffffff" stroke="#ffffff" stroke-width="1.400" stroke-linejoin="round"/>
 <path d="M9.200 6.600 L21.700 13.800 Q23.300 15 22 16.500 L18.400 19.600 Q17.600 20.500 18 21.500 L20.800 27.600 L8.900 20.500 Q7 19 8.200 17.600 L12 14.800 Q13 14 12.500 13 Z" fill="#7a6400"/>
 <path d="M-2 8.600 L31.800 26.100" stroke="#7a6400" stroke-width="6.500" fill="none"/>
 <path d="M-2.500 8.300 L32.300 26.400" stroke="#ffffff" stroke-width="2.600" fill="none"/>
</svg>
<span class="t st" id="s9" style="left:1962px;color:#ffffff">Alt + \ 手动补全</span>
<!-- bell -->
<svg style="left:2119px;top:1341px" width="17" height="21" viewBox="0 0 17 21" fill="none" stroke="#cccccc" stroke-width="1.500"><path d="M1.500 15.500h14c-1.300-1.300-2-2.700-2-5V8a5 5 0 0 0-10 0v2.500c0 2.300-.7 3.700-2 5z" stroke-linejoin="round"/><path d="M6.500 17.500a2 2 0 0 0 4 0"/></svg>

</body>
</html>
